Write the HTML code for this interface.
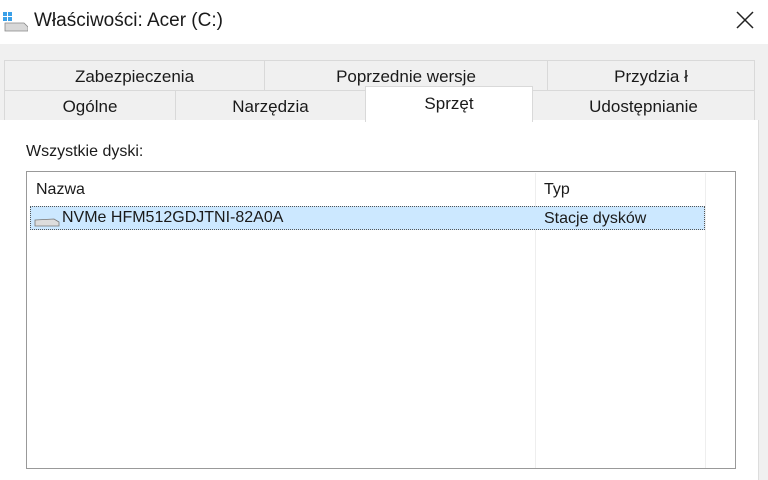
<!DOCTYPE html><html><head><meta charset="utf-8"><style>
body{margin:0;width:768px;height:480px;overflow:hidden;background:#f0f0f0;font-family:"Liberation Sans",sans-serif;color:#1a1a1a;position:relative}
.a{position:absolute}
.title{left:0;top:0;width:768px;height:44px;background:#fff}
.tab{position:absolute;background:#f0f0f0;border:1px solid #d9d9d9;box-sizing:border-box;text-align:center;font-size:17px;line-height:32px}
</style></head><body>
<div class="a title"></div>
<svg class="a" style="left:2px;top:10px" width="26" height="22" viewBox="0 0 26 22">
<rect x="1" y="2" width="4" height="4" fill="#3aa0e8"/><rect x="6" y="2" width="4" height="4" fill="#3aa0e8"/><rect x="1" y="7" width="4" height="4" fill="#3aa0e8"/><rect x="6" y="7" width="4" height="4" fill="#3aa0e8"/>
<path d="M3 13 L22 13 L26 17 L26 21 L3 21 Z" fill="#d8d8d8" stroke="#888" stroke-width="0.8"/></svg>
<div class="a" style="left:34px;top:10px;font-size:19px">Właściwości: Acer (C:)</div>
<svg class="a" style="left:736px;top:11px" width="18" height="18"><path d="M1 1L17 17M17 1L1 17" stroke="#222" stroke-width="1.5"/></svg>
<div class="tab" style="left:4px;top:60px;width:261px;height:31px">Zabezpieczenia</div>
<div class="tab" style="left:264px;top:60px;width:284px;height:31px">Poprzednie wersje</div>
<div class="tab" style="left:547px;top:60px;width:208px;height:31px">Przydzia ł</div>
<div class="tab" style="left:4px;top:90px;width:172px;height:31px">Ogólne</div>
<div class="tab" style="left:175px;top:90px;width:191px;height:31px">Narzędzia</div>
<div class="tab" style="left:532px;top:90px;width:223px;height:31px">Udostępnianie</div>
<div class="a" style="left:0;top:120px;width:758px;height:360px;background:#fff;border-right:1px solid #ddd"></div>
<div class="tab" style="left:365px;top:86px;width:168px;height:36px;background:#fff;border-bottom:none;line-height:34px">Sprzęt</div>
<div class="a" style="left:26px;top:143px;font-size:16px">Wszystkie dyski:</div>
<div class="a" style="left:26px;top:171px;width:710px;height:298px;box-sizing:border-box;border:1px solid #999;background:#fff"></div>
<div class="a" style="left:535px;top:173px;width:1px;height:295px;background:#eee"></div>
<div class="a" style="left:705px;top:173px;width:1px;height:295px;background:#eee"></div>
<div class="a" style="left:36px;top:181px;font-size:16px">Nazwa</div>
<div class="a" style="left:544px;top:181px;font-size:16px">Typ</div>
<div class="a" style="left:30px;top:206px;width:675px;height:24px;box-sizing:border-box;background:#cce8ff;border:1px dotted #555"></div>
<svg class="a" style="left:34px;top:215px" width="26" height="12"><path d="M1 5 L20 4 L25 7 L25 11 L1 11Z" fill="#ddd" stroke="#777" stroke-width="0.8"/></svg>
<div class="a" style="left:62px;top:209px;font-size:16px">NVMe HFM512GDJTNI-82A0A</div>
<div class="a" style="left:544px;top:210px;font-size:16px">Stacje dysków</div>
</body></html>
